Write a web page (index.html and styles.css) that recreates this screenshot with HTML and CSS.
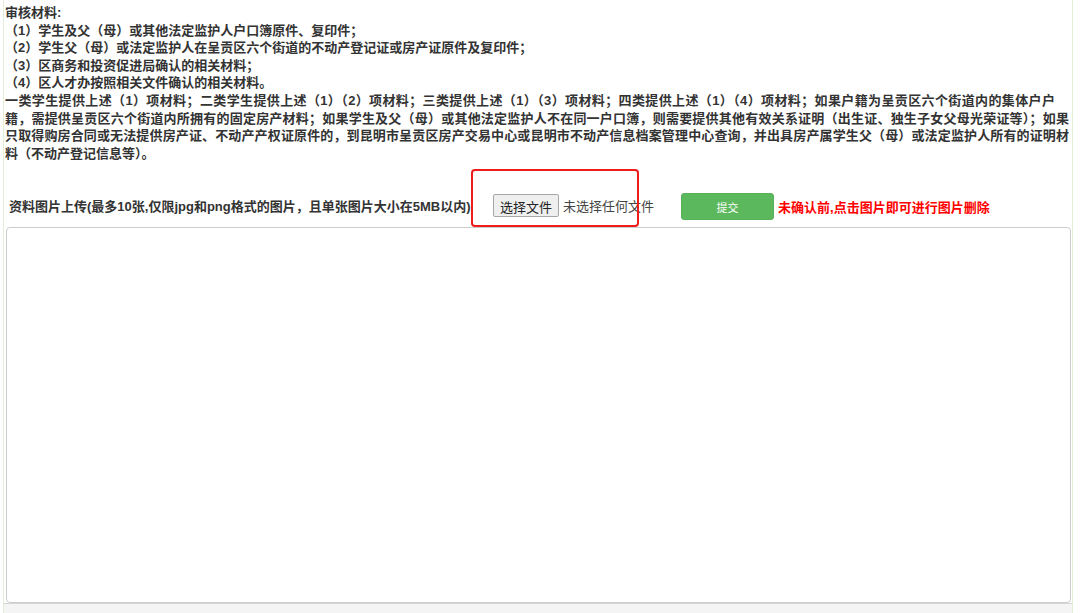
FILE: index.html
```html
<!DOCTYPE html>
<html lang="zh-CN">
  <head>
    <meta charset="UTF-8" />
    <title>资料图片上传</title>
    <link rel="stylesheet" href="styles.css">
  </head>
  <body>
    <div class="page">
      <!-- 审核材料说明 -->
      <div class="notice">
        <div>审核材料:</div>
        <div class="item">（1）学生及父（母）或其他法定监护人户口簿原件、复印件；</div>
        <div class="item">（2）学生父（母）或法定监护人在呈贡区六个街道的不动产登记证或房产证原件及复印件；</div>
        <div class="item">（3）区商务和投资促进局确认的相关材料；</div>
        <div class="item">（4）区人才办按照相关文件确认的相关材料。</div>
        <p class="rule">
          <span class="line first">一类学生提供上述（1）项材料；二类学生提供上述（1）（2）项材料；三类提供上述（1）（3）项材料；四类提供上述（1）（4）项材料；如果户籍为呈贡区六个街道内的集体户户</span>
          <span class="line">籍，需提供呈贡区六个街道内所拥有的固定房产材料；如果学生及父（母）或其他法定监护人不在同一户口簿，则需要提供其他有效关系证明（出生证、独生子女父母光荣证等）；如果</span>
          <span class="line">只取得购房合同或无法提供房产证、不动产产权证原件的，到昆明市呈贡区房产交易中心或昆明市不动产信息档案管理中心查询，并出具房产属学生父（母）或法定监护人所有的证明材</span>
          <span class="last">料（不动产登记信息等）。</span>
        </p>
      </div>

      <!-- 上传 -->
      <div class="upload">
        <span class="upload-label">资料图片上传(最多10张,仅限jpg和png格式的图片，且单张图片大小在5MB以内)</span>
        <span class="file-pick">
          <button class="file-btn">选择文件</button>
          <span class="file-name">未选择任何文件</span>
        </span>
        <button class="submit">提交</button>
        <span class="warn">未确认前,点击图片即可进行图片删除</span>
        <span class="mark"></span>
      </div>

      <div class="preview"></div>
      <div class="bottom"></div>
    </div>
  </body>
</html>
```

FILE: styles.css
```css
* {
  margin: 0;
  padding: 0;
  box-sizing: border-box;
}

html,
body {
  background: #fff;
  font-family: "Liberation Sans", "Noto Sans CJK SC", sans-serif;
  color: #333;
  height: 100%;
  overflow: hidden;
}

.page {
  margin: 0 7px 0 3px;
  height: 613px;
  border-left: 1px solid #e2eed8;
  border-right: 1px solid #e2eed8;
  display: flex;
  flex-direction: column;
}

.notice {
  padding: 4px 0 0 1px;
  font-size: 13px;
  font-weight: bold;
  line-height: 17.6px;
  color: #333;
}

.rule span {
  display: block;
}

/* 每行两端对齐，与原页面换行一致 */
.rule .line {
  width: 1064px;
  text-align: justify;
  text-align-last: justify;
}

.rule .first {
  width: 1050px;
}

.upload {
  position: relative;
  display: flex;
  align-items: center;
  margin-top: 28px;
  padding-left: 5px;
  height: 30px;
}

.upload-label {
  font-size: 13px;
  font-weight: bold;
  width: 465px;
  white-space: nowrap;
  overflow: hidden;
}

.file-pick {
  display: flex;
  align-items: center;
  margin-left: 19px;
}

.file-btn {
  font-family: inherit;
  font-size: 13px;
  color: #222;
  padding: 2px 6px;
  height: 23px;
  background: #efefef;
  border: 1px solid #a6a6a6;
  border-radius: 2px;
}

.file-name {
  margin-left: 4px;
  font-size: 13px;
  color: #444;
}

.submit {
  margin-left: 27px;
  width: 93px;
  height: 27px;
  background: #5cb85c;
  border: 1px solid #58b058;
  border-radius: 3px;
  color: #fff;
  font-family: inherit;
  font-size: 11px;
  margin-top: 3px;
}

.warn {
  margin-left: 4px;
  margin-top: 2px;
  color: #ff0000;
  font-size: 13px;
  font-weight: bold;
}

/* 标注框 */
.mark {
  position: absolute;
  left: 467px;
  top: -21px;
  width: 168px;
  height: 58px;
  border: 2px solid #ee1c1c;
  border-radius: 4px;
}

.preview {
  margin: 7px 1px 0 2px;
  flex: 1;
  border: 1px solid #ccc;
  border-radius: 4px;
}

.bottom {
  height: 10px;
  background: #f4f4f4;
  border-top: 1px solid #d6d6d6;
}
```
